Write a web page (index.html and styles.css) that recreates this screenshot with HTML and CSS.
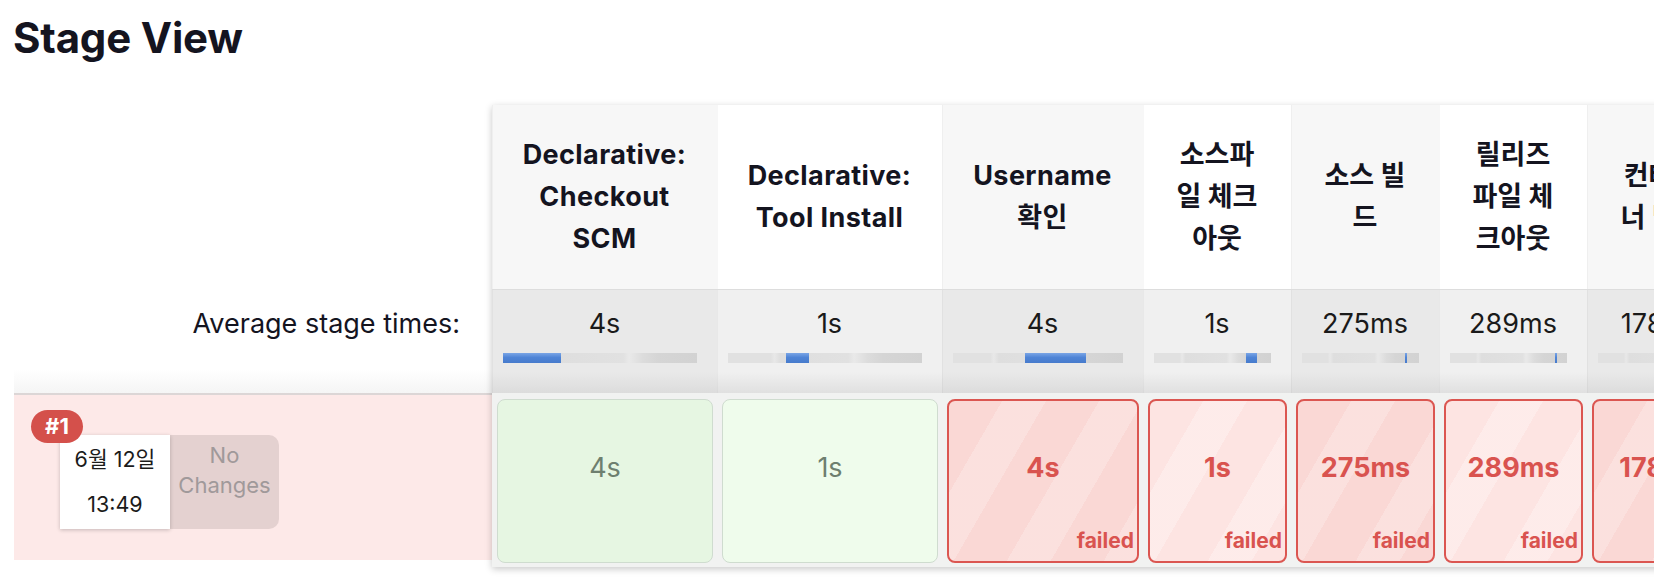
FILE: index.html
```html
<!DOCTYPE html>
<html lang="ko">
<head>
<meta charset="utf-8">
<title>Stage View</title>
<link rel="stylesheet" href="styles.css">
</head>
<body>
<h1 class="title">Stage View</h1>
<div class="stage-view">
  <div class="labels">
    <div class="label-head"></div>
    <div class="label-avg">Average stage times:</div>
    <div class="label-build">
      <div class="build-info">
        <span class="badge">#1</span>
        <div class="build-date"><div>6월 12일</div><div>13:49</div></div>
        <div class="build-changes">No<br>Changes</div>
      </div>
    </div>
  </div>
  <div class="stages">
    <div class="head wide">Declarative: Checkout SCM</div>
    <div class="head wide alt">Declarative: Tool Install</div>
    <div class="head wide">Username 확인</div>
    <div class="head alt">소스파일 체크아웃</div>
    <div class="head">소스 빌드</div>
    <div class="head alt">릴리즈 파일 체크아웃</div>
    <div class="head">컨테이너 빌드</div>

    <div class="avg"><div class="avg-time">4s</div><div class="bar"><span class="fill" style="margin-left:0%;width:30%"></span></div></div>
    <div class="avg alt"><div class="avg-time">1s</div><div class="bar"><span class="fill" style="margin-left:30%;width:12%"></span></div></div>
    <div class="avg"><div class="avg-time">4s</div><div class="bar"><span class="fill" style="margin-left:42.5%;width:36%"></span></div></div>
    <div class="avg alt"><div class="avg-time">1s</div><div class="bar"><span class="fill" style="margin-left:78.5%;width:9.5%"></span></div></div>
    <div class="avg"><div class="avg-time">275ms</div><div class="bar"><span class="fill" style="margin-left:88%;width:1.6%"></span></div></div>
    <div class="avg alt"><div class="avg-time">289ms</div><div class="bar"><span class="fill" style="margin-left:89.6%;width:1.6%"></span></div></div>
    <div class="avg"><div class="avg-time">178ms</div><div class="bar"><span class="fill" style="margin-left:91.2%;width:1.4%"></span></div></div>

    <div class="cell"><div class="box success"><span class="value">4s</span></div></div>
    <div class="cell alt"><div class="box success"><span class="value">1s</span></div></div>
    <div class="cell"><div class="box failed"><span class="value">4s</span><span class="status">failed</span></div></div>
    <div class="cell alt"><div class="box failed"><span class="value">1s</span><span class="status">failed</span></div></div>
    <div class="cell"><div class="box failed"><span class="value">275ms</span><span class="status">failed</span></div></div>
    <div class="cell alt"><div class="box failed"><span class="value">289ms</span><span class="status">failed</span></div></div>
    <div class="cell"><div class="box failed"><span class="value">178ms</span><span class="status">failed</span></div></div>
  </div>
</div>
</body>
</html>
```

FILE: styles.css
```css
* {
  box-sizing: border-box;
}

html, body {
  margin: 0;
  padding: 0;
  background: #ffffff;
  overflow: hidden;
}

body {
  width: 1654px;
  height: 586px;
  font-family: Inter, "Noto Sans CJK KR", "Noto Sans", sans-serif;
  color: #14141f;
}

.title {
  margin: 0;
  padding: 13px 0 0 13px;
  font-size: 42px;
  line-height: 50px;
  font-weight: 700;
  letter-spacing: -0.2px;
}

.stage-view {
  display: flex;
  margin-top: 42px;
  padding-left: 14px;
}

.labels {
  flex: 0 0 478px;
  display: flex;
  flex-direction: column;
}

.label-head {
  height: 184px;
}

.label-avg {
  height: 104px;
  padding: 19px 32px 0 0;
  text-align: right;
  font-size: 27px;
  line-height: 32px;
  background: linear-gradient(to bottom, #ffffff 0, #ffffff 80px, #f5f5f5 100%);
}

.label-build {
  height: 167px;
  border-top: 2px solid #dcd6d6;
  background: #fde9e8;
  padding: 40px 0 0 46px;
}

.build-info {
  position: relative;
  display: flex;
  width: max-content;
}

.badge {
  position: absolute;
  left: -29px;
  top: -25px;
  z-index: 2;
  width: 52px;
  height: 33px;
  border-radius: 17px;
  background: #d4504b;
  color: #ffffff;
  font-size: 22px;
  font-weight: 700;
  line-height: 33px;
  text-align: center;
}

.build-date {
  width: 110px;
  height: 94px;
  padding-top: 2px;
  background: #ffffff;
  box-shadow: 0 1px 4px rgba(0, 0, 0, 0.22);
  font-size: 21.5px;
  line-height: 45px;
  text-align: center;
  color: #1b1b1b;
  position: relative;
  z-index: 1;
}

.build-changes {
  width: 109px;
  height: 94px;
  padding-top: 5px;
  background: #e4d1d0;
  border-radius: 0 10px 10px 0;
  color: #a0999a;
  font-size: 22px;
  line-height: 30px;
  text-align: center;
}

.stages {
  flex: 0 0 auto;
  display: grid;
  grid-template-columns: 225px 225px 201px 148px 148px 148px 148px;
  grid-template-rows: 184px 104px 174px;
  background: #f1f2f1;
  box-shadow: 0 2px 7px rgba(0, 0, 0, 0.22);
}

.head {
  display: flex;
  align-items: center;
  justify-content: center;
  padding: 0 26px;
  text-align: center;
  background: #f7f7f7;
  font-size: 27px;
  line-height: 41.7px;
  font-weight: 700;
  box-shadow: inset 1px 0 0 rgba(0, 0, 0, 0.03);
}

.head.wide {
  padding: 0 20px;
  letter-spacing: 0.4px;
}

.head.alt {
  background: #ffffff;
}

.avg {
  border-top: 1px solid #dddddd;
  padding-top: 18px;
  background: linear-gradient(to bottom, #e9e9e9 0, #e9e9e9 82px, #dcdcdc 100%);
  text-align: center;
  box-shadow: inset 1px 0 0 rgba(0, 0, 0, 0.03);
}

.avg.alt {
  background: linear-gradient(to bottom, #f0f0f0 0, #f0f0f0 82px, #e0e0e0 100%);
}

.avg-time {
  font-size: 27px;
  line-height: 32px;
  color: #1a1a1a;
}

.bar {
  display: flex;
  height: 10px;
  margin: 13px 20px 0 11px;
  background: linear-gradient(to right, #e1e1e1 0, #e1e1e1 22%, #e8e8e8 24%, #dedede 27%, #e1e1e1 62%, #e9e9e9 65%, #dcdcdc 72%, #d5d5d5 80%, #d2d2d2 100%);
}

.fill {
  display: block;
  height: 10px;
  min-width: 2px;
  background: linear-gradient(to bottom, #7aa5e6 0, #4f84d6 45%, #477bcc 100%);
}

.cell {
  padding: 6px 4px 4px 5px;
}

.box {
  height: 164px;
  border-radius: 8px;
  display: flex;
  flex-direction: column;
  align-items: center;
  font-size: 27px;
  line-height: 32px;
}

.box.success {
  border: 1.5px solid #cfdccf;
  background: #e6f6e2;
  color: #6e7f6f;
  padding-top: 51.5px;
}

.cell.alt .box.success {
  background: #effcec;
}

.box.failed {
  border: 2px solid #db5651;
  color: #d9534f;
  font-weight: 700;
  padding: 51px 3px 9px 3px;
  background:
    repeating-linear-gradient(120deg, rgba(255, 255, 255, 0) 0, rgba(255, 255, 255, 0) 46px, rgba(255, 255, 255, 0.22) 46px, rgba(255, 255, 255, 0.22) 84px),
    #fad8d5;
}

.cell.alt .box.failed {
  background:
    repeating-linear-gradient(120deg, rgba(255, 255, 255, 0) 0, rgba(255, 255, 255, 0) 46px, rgba(255, 255, 255, 0.28) 46px, rgba(255, 255, 255, 0.28) 84px),
    #fde4e2;
}

.status {
  margin-top: auto;
  align-self: flex-end;
  font-size: 21px;
  line-height: 22px;
}
```
